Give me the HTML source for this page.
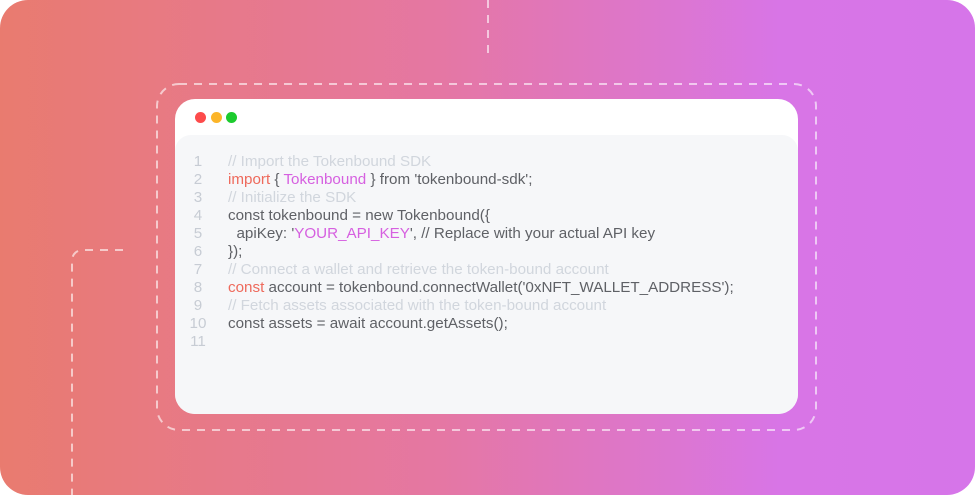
<!DOCTYPE html>
<html><head><meta charset="utf-8"><style>
*{margin:0;padding:0;box-sizing:border-box}
body{width:975px;height:495px;background:#fff;position:relative;overflow:hidden;font-family:"Liberation Sans",sans-serif}
.bg{position:absolute;left:0;top:0;width:975px;height:495px;border-radius:28px;background:linear-gradient(90deg,#e97b6f 0%,#e577a3 45%,#d875e6 80%,#d675e9 100%)}
.win{position:absolute;left:175px;top:99px;width:623px;height:315px;border-radius:20px;background:#fff;overflow:hidden}
.body{position:absolute;left:0;top:36px;right:0;bottom:0;background:#f6f7f9;border-radius:16px 16px 0 0}
.dot{position:absolute;top:13px;width:11px;height:11px;border-radius:50%}
.code{position:absolute;left:0;top:153px;font-size:15.2px;line-height:18px;color:#5f6166;white-space:pre}
.ln{position:absolute;left:188px;width:20px;color:#c7ccd4;text-align:center}
.tx{position:absolute;left:228px}
.c{color:#d1d6dd}.r{color:#ee6a5c}.p{color:#d660e0}
</style></head><body>
<div class="bg"></div>
<svg width="975" height="495" style="position:absolute;left:0;top:0">
<g fill="none" stroke="rgba(255,255,255,0.6)" stroke-width="2" stroke-dasharray="8 7">
<line x1="488" y1="0" x2="488" y2="55"/>
<rect x="157" y="84" width="659" height="346" rx="22"/>
<path d="M123 250 H84 Q72 250 72 262 V495"/>
</g></svg>
<div class="win">
<div class="dot" style="left:20px;background:#fd4b4b"></div>
<div class="dot" style="left:36px;background:#fcb529"></div>
<div class="dot" style="left:51px;background:#1ccb2e"></div>
<div class="body"></div>
</div>
<div class="code">
<div class="ln" style="top:0">1</div><div class="tx c" style="top:0">// Import the Tokenbound SDK</div>
<div class="ln" style="top:18px">2</div><div class="tx" style="top:18px"><span class="r">import</span> { <span class="p">Tokenbound</span> } from 'tokenbound-sdk';</div>
<div class="ln" style="top:36px">3</div><div class="tx c" style="top:36px">// Initialize the SDK</div>
<div class="ln" style="top:54px">4</div><div class="tx" style="top:54px">const tokenbound = new Tokenbound({</div>
<div class="ln" style="top:72px">5</div><div class="tx" style="top:72px">  apiKey: '<span class="p">YOUR_API_KEY</span>', // Replace with your actual API key</div>
<div class="ln" style="top:90px">6</div><div class="tx" style="top:90px">});</div>
<div class="ln" style="top:108px">7</div><div class="tx c" style="top:108px">// Connect a wallet and retrieve the token-bound account</div>
<div class="ln" style="top:126px">8</div><div class="tx" style="top:126px"><span class="r">const</span> account = tokenbound.connectWallet('0xNFT_WALLET_ADDRESS');</div>
<div class="ln" style="top:144px">9</div><div class="tx c" style="top:144px">// Fetch assets associated with the token-bound account</div>
<div class="ln" style="top:162px">10</div><div class="tx" style="top:162px">const assets = await account.getAssets();</div>
<div class="ln" style="top:180px">11</div>
</div>
</body></html>
